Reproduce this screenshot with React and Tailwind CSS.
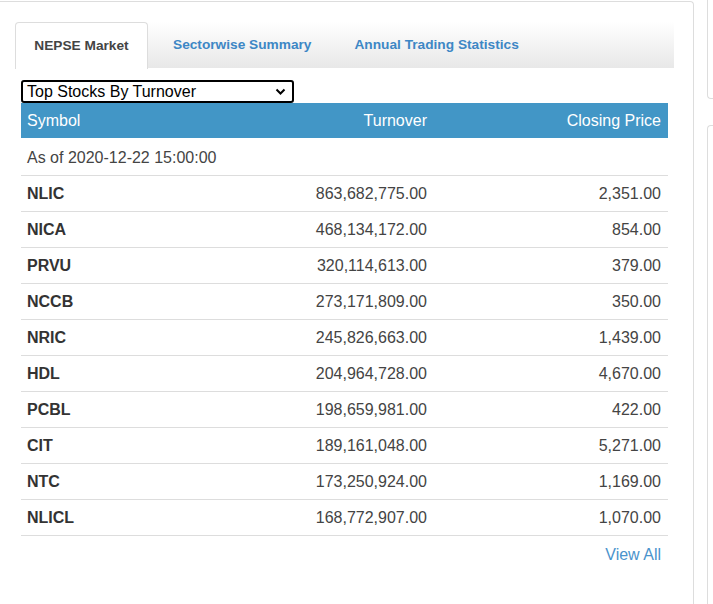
import React from 'react';

const ROWS = [
  ['NLIC', '863,682,775.00', '2,351.00'],
  ['NICA', '468,134,172.00', '854.00'],
  ['PRVU', '320,114,613.00', '379.00'],
  ['NCCB', '273,171,809.00', '350.00'],
  ['NRIC', '245,826,663.00', '1,439.00'],
  ['HDL', '204,964,728.00', '4,670.00'],
  ['PCBL', '198,659,981.00', '422.00'],
  ['CIT', '189,161,048.00', '5,271.00'],
  ['NTC', '173,250,924.00', '1,169.00'],
  ['NLICL', '168,772,907.00', '1,070.00']
];

const App = () => {
  return (
    <div className="flex h-[604px] w-[713px] overflow-hidden bg-white font-['Liberation_Sans',Arial,sans-serif] text-[#333]">
      <div className="mt-px h-[640px] w-[694px] shrink-0 rounded-tr border-t border-r border-[#ddd] pl-[15px] pt-5">
        <div className="flex h-[46px] w-[659px] bg-gradient-to-b from-white to-[#e8e8e8] text-[13.7px] font-bold">
          <div className="flex h-[47px] w-[133px] items-center justify-center rounded-t border border-b-0 border-[#ddd] bg-white text-[#444]">
            NEPSE Market
          </div>
          <div className="flex h-[46px] items-center pl-[25px] pr-[21px] text-[#3d87c5]">Sectorwise Summary</div>
          <div className="flex h-[46px] items-center pl-[22px] text-[#3d87c5]">Annual Trading Statistics</div>
        </div>

        <div className="ml-[6px] mt-3 w-[647px]">
          <div className="flex h-[23px] w-[273px] items-center justify-between rounded-[3px] border-2 border-black pl-[4px] pr-[6px] text-[16px] leading-none text-black">
            <span>Top Stocks By Turnover</span>
            <svg width="11" height="8" viewBox="0 0 11 8" fill="none">
              <path d="M1.5 1.5 5.5 5.5 9.5 1.5" stroke="#000" strokeWidth="2" />
            </svg>
          </div>

          <div className="flex h-[35px] items-center bg-[#4296c6] text-[16px] text-white">
            <div className="w-[206px] pl-[6px]">Symbol</div>
            <div className="w-[200px] text-right">Turnover</div>
            <div className="flex-1 pr-[7px] text-right">Closing Price</div>
          </div>

          <div className="flex h-[38px] items-center border-b border-[#ddd] pl-[6px] pt-[2px] text-[16px] text-[#444]">
            As of 2020-12-22 15:00:00
          </div>

          {ROWS.map(([sym, turnover, price]) => (
            <div key={sym} className="flex h-[36px] items-center border-b border-[#ddd] text-[16px]">
              <div className="w-[206px] pl-[6px] font-bold text-[#333]">{sym}</div>
              <div className="w-[200px] text-right text-[#444]">{turnover}</div>
              <div className="flex-1 pr-[7px] text-right text-[#444]">{price}</div>
            </div>
          ))}

          <div className="pr-[7px] pt-[7px] text-right text-[16px] text-[#4a93cc]">View All</div>
        </div>
      </div>

      <div className="ml-[13px] flex shrink-0 flex-col">
        <div className="-mt-2 h-[107px] w-[20px] shrink-0 rounded-bl border-b border-l border-[#ddd]" />
        <div className="mt-[26px] h-[500px] w-[20px] shrink-0 rounded-tl border-t border-l border-[#ddd]" />
      </div>
    </div>
  );
};

export default App;
